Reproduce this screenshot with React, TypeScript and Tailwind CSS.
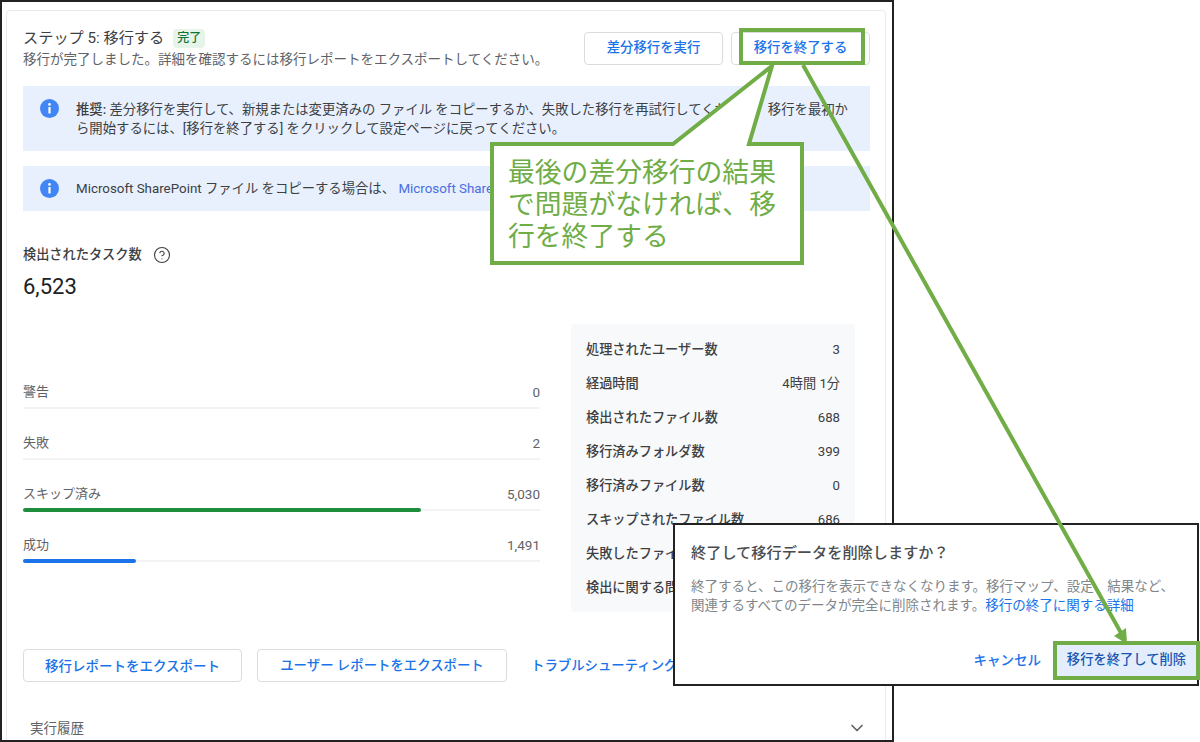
import { ChevronDown, CircleHelp } from 'lucide-react';

const stats = [
  { label: '処理されたユーザー数', value: '3' },
  { label: '経過時間', value: '4時間 1分' },
  { label: '検出されたファイル数', value: '688' },
  { label: '移行済みフォルダ数', value: '399' },
  { label: '移行済みファイル数', value: '0' },
  { label: 'スキップされたファイル数', value: '686' },
  { label: '失敗したファイル数', value: '2' },
  { label: '検出に関する問題', value: '0' },
];

function InfoIcon() {
  return (
    <svg width="19" height="19" viewBox="0 0 19 19" className="shrink-0">
      <circle cx="9.5" cy="9.5" r="9.5" fill="#4285f4" />
      <circle cx="9.5" cy="5.4" r="1.3" fill="#fff" />
      <rect x="8.4" y="8" width="2.2" height="6.4" fill="#fff" />
    </svg>
  );
}

function ProgressRow({ label, value, barClass }: { label: string; value: string; barClass?: string }) {
  return (
    <div className="h-[51px] pt-[23px]">
      <div className="flex h-5 items-center justify-between text-[13px] text-[#5f6368]">
        <span>{label}</span>
        <span className="text-[13.5px]">{value}</span>
      </div>
      <div className="mt-[5px] h-[2px] bg-[#f1f3f4]">{barClass && <div className={barClass} />}</div>
    </div>
  );
}

export default function App() {
  return (
    <div className="relative h-[742px] w-[1200px] overflow-hidden bg-white font-['Roboto','Noto_Sans_CJK_JP',sans-serif] text-[#3c4043]">
      <div className="h-[742px] w-[894px] overflow-hidden border-2 border-[#222]">
        <div className="ml-1 mt-2 w-[880px] rounded-t border border-[#e8eaed] pb-10 pl-4 pr-[15px] pt-[18px]">
          <div className="flex h-[57px] items-start justify-between">
            <div>
              <div className="flex h-[19px] items-center gap-[9px]">
                <span className="text-[15.2px] leading-[19px]">ステップ 5: 移行する</span>
                <span className="rounded-sm bg-[#e6f4ea] px-1 text-[12px] font-medium leading-[19px] text-[#137333]">完了</span>
              </div>
              <p className="mt-[1px] text-[13.5px] leading-5 text-[#5f6368]">
                移行が完了しました。詳細を確認するには移行レポートをエクスポートしてください。
              </p>
            </div>
            <div className="mt-[3px] flex gap-2">
              <button className="h-[33px] w-[139px] rounded border border-[#dadce0] text-[13.4px] font-medium text-[#1a73e8]">差分移行を実行</button>
              <button className="h-[33px] w-[139px] rounded border border-[#dadce0] text-[13.4px] font-medium text-[#1a73e8]">移行を終了する</button>
            </div>
          </div>

          <div className="flex h-[65px] gap-[17px] bg-[#e8f0fe] pl-[17px] pt-[13px]">
            <InfoIcon />
            <p className="whitespace-nowrap pt-px text-[13.35px] leading-[19px]">
              <span className="font-medium">推奨:</span> 差分移行を実行して、新規または変更済みの ファイル をコピーするか、失敗した移行を再試行してください。移行を最初か
              <br />
              ら開始するには、[移行を終了する] をクリックして設定ページに戻ってください。
            </p>
          </div>

          <div className="mt-[15px] flex h-[45px] items-center gap-[17px] bg-[#e8f0fe] pl-[17px]">
            <InfoIcon />
            <p className="whitespace-nowrap pt-px text-[13.35px]">
              Microsoft SharePoint ファイル をコピーする場合は、 <span className="text-[#4a6ee0]">Microsoft SharePoint の移行ガイド</span>
            </p>
          </div>

          <div className="mt-[34px] flex h-5 items-center gap-[11px]">
            <span className="text-[13.2px] font-medium">検出されたタスク数</span>
            <CircleHelp size={18} strokeWidth={1.5} />
          </div>
          <div className="mt-[7px] text-[22px] leading-[30px] text-[#202124]">6,523</div>

          <div className="mt-[22px] flex gap-[31px]">
            <div className="w-[517px] pt-[35px]">
              <ProgressRow label="警告" value="0" />
              <ProgressRow label="失敗" value="2" />
              <ProgressRow label="スキップ済み" value="5,030" barClass="h-1 w-[398px] -translate-y-px rounded-full bg-[#1e8e3e]" />
              <ProgressRow label="成功" value="1,491" barClass="h-1 w-[113px] -translate-y-px rounded-full bg-[#1a73e8]" />
            </div>
            <div className="w-[284px] rounded-sm bg-[#f8f9fa] px-[15px] py-2">
              {stats.map((s) => (
                <div key={s.label} className="flex h-[34px] items-center justify-between pt-[2px] text-[13.2px]">
                  <span className="font-medium">{s.label}</span>
                  <span>{s.value}</span>
                </div>
              ))}
            </div>
          </div>

          <div className="mt-[37px] flex items-center">
            <button className="h-[33px] w-[219px] rounded border border-[#dadce0] pt-px text-[13.5px] font-medium text-[#1a73e8]">移行レポートをエクスポート</button>
            <button className="ml-[15px] h-[33px] w-[250px] rounded border border-[#dadce0] pt-px text-[13.4px] font-medium text-[#1a73e8]">ユーザー レポートをエクスポート</button>
            <span className="ml-6 whitespace-nowrap pt-px text-[13.4px] font-medium text-[#1a73e8]">トラブルシューティング</span>
          </div>

          <div className="mt-9 flex h-5 items-center justify-between pl-[7px] pr-[3px] text-[13.5px] text-[#5f6368]">
            <span>実行履歴</span>
            <ChevronDown size={20} />
          </div>
        </div>
      </div>

      {/* dialog pasted over the page */}
      <div className="absolute left-[673px] top-[523px] flex h-[163px] w-[526px] flex-col border-2 border-[#222] bg-white pb-2 pl-4 pt-[18px]">
        <div className="text-[15.2px] font-medium leading-5 text-[#4a4d50]">終了して移行データを削除しますか？</div>
        <p className="mt-[14px] whitespace-nowrap text-[13.5px] leading-[19px] text-[#80868b]">
          終了すると、この移行を表示できなくなります。移行マップ、設定、結果など、
          <br />
          関連するすべてのデータが完全に削除されます。<span className="text-[#1a73e8]">移行の終了に関する詳細</span>
        </p>
        <div className="mt-auto flex items-center justify-end gap-[15px]">
          <span className="text-[13.5px] font-medium text-[#1a73e8]">キャンセル</span>
          <button className="h-8 w-[141px] bg-[#e3edfb] text-[13.3px] font-medium text-[#1a56b0]">移行を終了して削除</button>
        </div>
      </div>

      {/* green annotations */}
      <div className="absolute left-[739px] top-[28px] h-[37px] w-[126px] border-4 border-[#70ad47]" />
      <div className="absolute left-[1053px] top-[641px] h-[39px] w-[147px] border-4 border-[#70ad47]" />
      <svg className="absolute left-0 top-0" width="1200" height="742" viewBox="0 0 1200 742" fill="none">
        <path d="M803 65 L1125 640" stroke="#70ad47" strokeWidth="4" />
        <path d="M1127 644 L1114 636 L1126 628 Z" fill="#70ad47" />
        <path d="M492 144 H673 L772 66 L749 144 H802 V263 H492 Z" fill="#fff" stroke="#70ad47" strokeWidth="4" />
      </svg>
      <div className="absolute left-[508px] top-[157px] w-[282px] text-[26.8px] leading-8 text-[#70ad47]">
        最後の差分移行の結果で問題がなければ、移行を終了する
      </div>
    </div>
  );
}
